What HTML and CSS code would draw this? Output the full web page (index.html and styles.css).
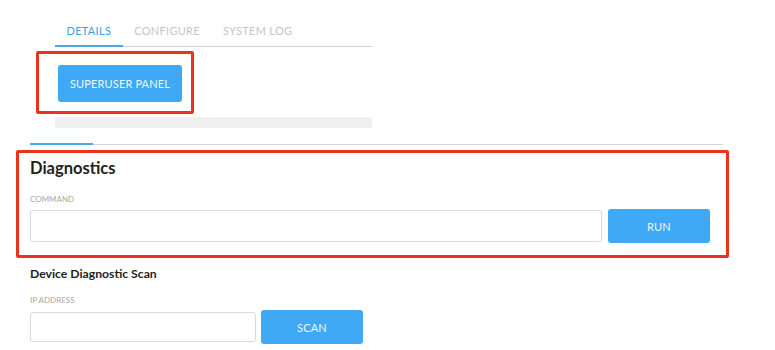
FILE: index.html
```html
<!DOCTYPE html>
<html lang="en">
<head>
    <meta charset="UTF-8">
    <meta name="viewport" content="width=device-width, initial-scale=1.0">
    <title>Device Details</title>
    <link rel="stylesheet" href="styles.css">
</head>
<body>

<div class="page">
    <div class="panel">
        <ul class="tabs">
            <li class="active">Details</li>
            <li>Configure</li>
            <li>System Log</li>
        </ul>
        <div class="panel-body">
            <button class="btn btn-superuser">Superuser Panel</button>
        </div>
        <div class="panel-foot"></div>
    </div>

    <div class="section-tabs"><span></span></div>

    <section class="diag">
        <h2>Diagnostics</h2>
        <label class="field-label">Command</label>
        <div class="field-row">
            <input type="text" class="input input-command">
            <button class="btn btn-action">Run</button>
        </div>
    </section>

    <section class="scan">
        <h3>Device Diagnostic Scan</h3>
        <label class="field-label">IP Address</label>
        <div class="field-row field-row-small">
            <input type="text" class="input input-ip">
            <button class="btn btn-action">Scan</button>
        </div>
    </section>

    <!-- annotation boxes -->
    <div class="annot annot-superuser"></div>
    <div class="annot annot-diag"></div>
</div>

</body>
</html>
```

FILE: styles.css
```css
* {
    box-sizing: border-box;
}
html, body {
    margin: 0;
    background: #fff;
}
body {
    font-family: Lato, "Open Sans", sans-serif;
    color: #222;
}
.page {
    position: relative;
    width: 775px;
    height: 350px;
    overflow: hidden;
}

/* top panel with tabs */
.panel {
    margin-left: 55px;
    width: 317px;
}
.tabs {
    list-style: none;
    margin: 0;
    padding: 0;
    display: flex;
    border-bottom: 1px solid #d3d3d3;
}
.tabs li {
    font-size: 11px;
    line-height: 14px;
    letter-spacing: 0.3px;
    text-transform: uppercase;
    color: #c6c6c6;
    padding: 24px 11.5px 7px;
    border-bottom: 2px solid transparent;
    margin-bottom: -1px;
}
.tabs li.active {
    color: #3e9fdc;
    border-bottom-color: #4aa9e6;
}
.panel-body {
    padding: 18px 0 15px 3px;
}
.panel-foot {
    height: 11px;
    background: #f0f0f0;
}

/* buttons */
.btn {
    display: block;
    border: none;
    border-radius: 3px;
    background: #3fa9f5;
    color: #eef7ff;
    font-family: inherit;
    font-size: 11px;
    letter-spacing: 0.15px;
    text-transform: uppercase;
    cursor: pointer;
}
.btn-superuser {
    width: 124px;
    height: 37px;
}
.btn-action {
    width: 102px;
    height: 34px;
}

/* second tab line */
.section-tabs {
    margin: 15px 0 0 30px;
    width: 693px;
    border-bottom: 1px solid #d3d3d3;
}
.section-tabs span {
    display: block;
    width: 63px;
    height: 2px;
    margin-bottom: -1px;
    background: #4aa9e6;
}

/* forms */
.diag, .scan {
    margin-left: 30px;
}
.diag h2 {
    margin: 13px 0 0;
    font-size: 16.5px;
    line-height: 20px;
    font-weight: 700;
}
.scan h3 {
    margin: 23px 0 0;
    font-size: 12.2px;
    line-height: 16px;
    font-weight: 700;
}
.field-label {
    display: block;
    font-size: 8px;
    line-height: 10px;
    text-transform: uppercase;
    color: #a8a8a8;
    margin-top: 16px;
}
.scan .field-label {
    margin-top: 13px;
}
.field-row {
    display: flex;
    align-items: center;
    gap: 6px;
    margin-top: 5px;
}
.field-row-small {
    gap: 5px;
}
.input {
    border: 1px solid #d9d9d9;
    border-radius: 3px;
    background: #fff;
    outline: none;
}
.input-command {
    width: 572px;
    height: 32px;
}
.input-ip {
    width: 226px;
    height: 30px;
}

/* red annotation frames drawn over the screenshot */
.annot {
    position: absolute;
    border: 3px solid #e9331d;
    border-radius: 2px;
    pointer-events: none;
}
.annot-superuser {
    left: 36px;
    top: 51px;
    width: 158px;
    height: 63px;
}
.annot-diag {
    left: 16px;
    top: 150px;
    width: 713px;
    height: 108px;
}
```
